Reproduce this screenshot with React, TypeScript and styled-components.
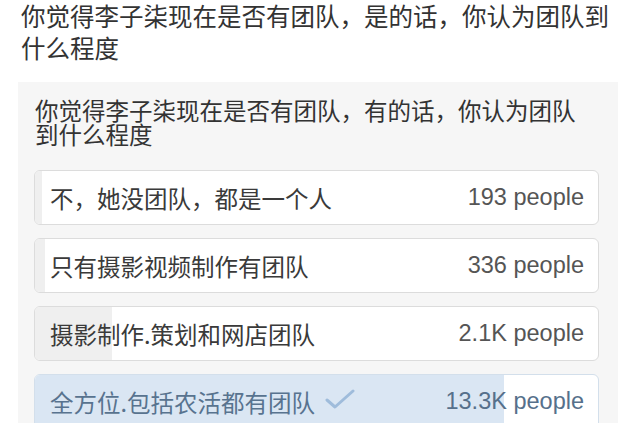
import styled, { createGlobalStyle } from 'styled-components';

const GlobalStyle = createGlobalStyle`
  html, body {
    margin: 0;
    padding: 0;
    background: #ffffff;
  }
  body {
    font-family: 'Noto Sans CJK SC', 'Noto Sans', sans-serif;
    color: #333333;
    overflow: hidden;
  }
`;

const options = [
  { label: '不，她没团队，都是一个人', count: '193 people', share: 1.2, picked: false },
  { label: '只有摄影视频制作有团队', count: '336 people', share: 1.8, picked: false },
  { label: '摄影制作.策划和网店团队', count: '2.1K people', share: 13.6, picked: false },
  { label: '全方位.包括农活都有团队', count: '13.3K people', share: 83.3, picked: true },
];

const StyledPage = styled.main`
  width: 618px;
  height: 423px;
  padding-left: 18px;
  box-sizing: border-box;
  overflow: hidden;
`;

const StyledHeading = styled.h1`
  margin: 0 4px 0 3px;
  font-size: 24.5px;
  font-weight: 400;
  line-height: 32px;
  color: #333333;
`;

const StyledPoll = styled.section`
  margin-top: 18px;
  padding: 17px 19px 0 16px;
  background: #f6f6f6;
  display: flex;
  flex-direction: column;
  gap: 13px;
`;

const StyledPollTitle = styled.h2`
  margin: 0 10px 11px 1px;
  font-size: 23.5px;
  font-weight: 400;
  line-height: 23.5px;
  color: #333333;
`;

const StyledOption = styled.div<{ $picked: boolean }>`
  position: relative;
  height: 55px;
  box-sizing: border-box;
  display: flex;
  align-items: center;
  justify-content: space-between;
  padding: 0 14px 0 15px;
  background: #ffffff;
  border: 1px solid ${({ $picked }) => ($picked ? '#d3dfeb' : '#dcdcdc')};
  border-radius: 6px;
  overflow: hidden;
  color: ${({ $picked }) => ($picked ? '#58738f' : '#3a3a3a')};
`;

const StyledFill = styled.span<{ $picked: boolean }>`
  position: absolute;
  left: 0;
  top: 0;
  bottom: 0;
  background: ${({ $picked }) => ($picked ? '#dae6f3' : '#efefef')};
`;

const StyledLabel = styled.span`
  position: relative;
  display: flex;
  align-items: center;
  gap: 10px;
  font-size: 23.5px;
`;

const StyledCheck = styled.svg`
  margin-top: -5px;
`;

const StyledCount = styled.span<{ $picked: boolean }>`
  position: relative;
  font-family: 'Liberation Sans', Arial, sans-serif;
  font-size: 23.5px;
  color: ${({ $picked }) => ($picked ? '#56708b' : '#555555')};
`;

const CheckIcon = () => (
  <StyledCheck width="30" height="22" viewBox="0 0 30 22" aria-hidden>
    <path d="M2 12 L10 19 L28 3" fill="none" stroke="#9fbcdb" strokeWidth="3" strokeLinecap="round" strokeLinejoin="round" />
  </StyledCheck>
);

const App = () => (
  <>
    <GlobalStyle />
    <StyledPage>
      <StyledHeading>你觉得李子柒现在是否有团队，是的话，你认为团队到什么程度</StyledHeading>
      <StyledPoll>
        <StyledPollTitle>你觉得李子柒现在是否有团队，有的话，你认为团队到什么程度</StyledPollTitle>
        {options.map((option) => (
          <StyledOption key={option.label} $picked={option.picked}>
            <StyledFill $picked={option.picked} style={{ width: `${option.share}%` }} />
            <StyledLabel>
              {option.label}
              {option.picked && <CheckIcon />}
            </StyledLabel>
            <StyledCount $picked={option.picked}>{option.count}</StyledCount>
          </StyledOption>
        ))}
      </StyledPoll>
    </StyledPage>
  </>
);

export default App;
